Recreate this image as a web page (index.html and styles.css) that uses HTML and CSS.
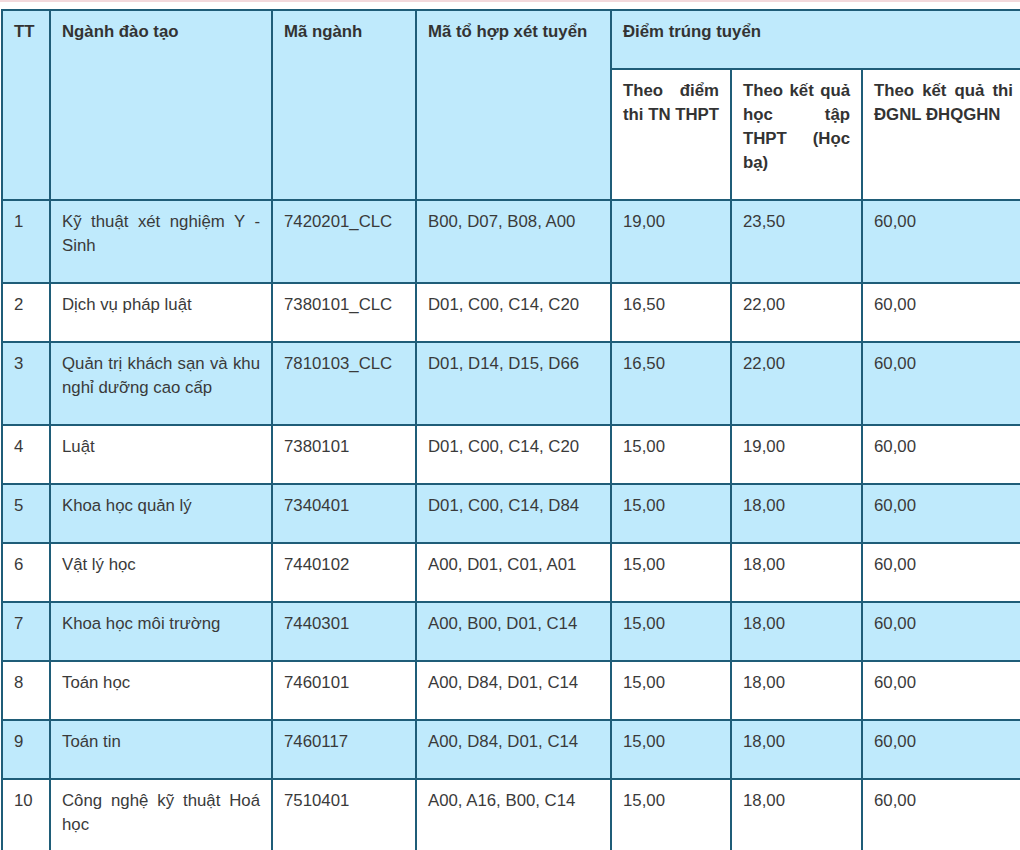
FILE: index.html
```html
<!DOCTYPE html>
<html lang="vi">
<head>
<meta charset="utf-8">
<link rel="stylesheet" href="styles.css">
</head>
<body>
<div class="page">
<table class="scores">
<colgroup>
<col class="c-tt"><col class="c-name"><col class="c-code"><col class="c-combo"><col class="c-s1"><col class="c-s2"><col class="c-s3">
</colgroup>
<thead>
<tr class="h1">
<th rowspan="2">TT</th>
<th rowspan="2">Ngành đào tạo</th>
<th rowspan="2">Mã ngành</th>
<th rowspan="2">Mã tổ hợp xét tuyển</th>
<th colspan="3">Điểm trúng tuyển</th>
</tr>
<tr class="h2">
<th>Theo điểm thi TN THPT</th>
<th>Theo kết quả học tập THPT (Học bạ)</th>
<th>Theo kết quả thi ĐGNL ĐHQGHN</th>
</tr>
</thead>
<tbody>
<tr class="alt"><td>1</td><td>Kỹ thuật xét nghiệm Y - Sinh</td><td>7420201_CLC</td><td>B00, D07, B08, A00</td><td>19,00</td><td>23,50</td><td>60,00</td></tr>
<tr><td>2</td><td>Dịch vụ pháp luật</td><td>7380101_CLC</td><td>D01, C00, C14, C20</td><td>16,50</td><td>22,00</td><td>60,00</td></tr>
<tr class="alt"><td>3</td><td>Quản trị khách sạn và khu nghỉ dưỡng cao cấp</td><td>7810103_CLC</td><td>D01, D14, D15, D66</td><td>16,50</td><td>22,00</td><td>60,00</td></tr>
<tr><td>4</td><td>Luật</td><td>7380101</td><td>D01, C00, C14, C20</td><td>15,00</td><td>19,00</td><td>60,00</td></tr>
<tr class="alt"><td>5</td><td>Khoa học quản lý</td><td>7340401</td><td>D01, C00, C14, D84</td><td>15,00</td><td>18,00</td><td>60,00</td></tr>
<tr><td>6</td><td>Vật lý học</td><td>7440102</td><td>A00, D01, C01, A01</td><td>15,00</td><td>18,00</td><td>60,00</td></tr>
<tr class="alt"><td>7</td><td>Khoa học môi trường</td><td>7440301</td><td>A00, B00, D01, C14</td><td>15,00</td><td>18,00</td><td>60,00</td></tr>
<tr><td>8</td><td>Toán học</td><td>7460101</td><td>A00, D84, D01, C14</td><td>15,00</td><td>18,00</td><td>60,00</td></tr>
<tr class="alt"><td>9</td><td>Toán tin</td><td>7460117</td><td>A00, D84, D01, C14</td><td>15,00</td><td>18,00</td><td>60,00</td></tr>
<tr><td>10</td><td>Công nghệ kỹ thuật Hoá học</td><td>7510401</td><td>A00, A16, B00, C14</td><td>15,00</td><td>18,00</td><td>60,00</td></tr>
</tbody>
</table>
</div>
</body>
</html>
```

FILE: styles.css
```css
html, body {
  margin: 0;
  padding: 0;
  background: #ffffff;
  overflow: hidden;
}

.page {
  border-top: 2px solid #f3d9dc;
  padding: 7px 0 0 1px;
  width: 1200px;
}

.scores {
  border-collapse: collapse;
  table-layout: fixed;
  width: 1023px;
  font-family: "Liberation Sans", Arial, sans-serif;
  font-size: 16.8px;
  line-height: 24px;
  color: #3a3a3a;
}

.c-tt { width: 48px; }
.c-name { width: 222px; }
.c-code { width: 144px; }
.c-combo { width: 195px; }
.c-s1 { width: 120px; }
.c-s2 { width: 131px; }
.c-s3 { width: 163px; }

.scores th,
.scores td {
  border: 2px solid #1f5d78;
  padding: 9px 11px 24px;
  vertical-align: top;
  text-align: justify;
}

.scores th {
  font-weight: bold;
  color: #333333;
}

.h1 th {
  background: #bfeafc;
}

.h2 th {
  background: #ffffff;
}

.alt td {
  background: #bfeafc;
}
```
